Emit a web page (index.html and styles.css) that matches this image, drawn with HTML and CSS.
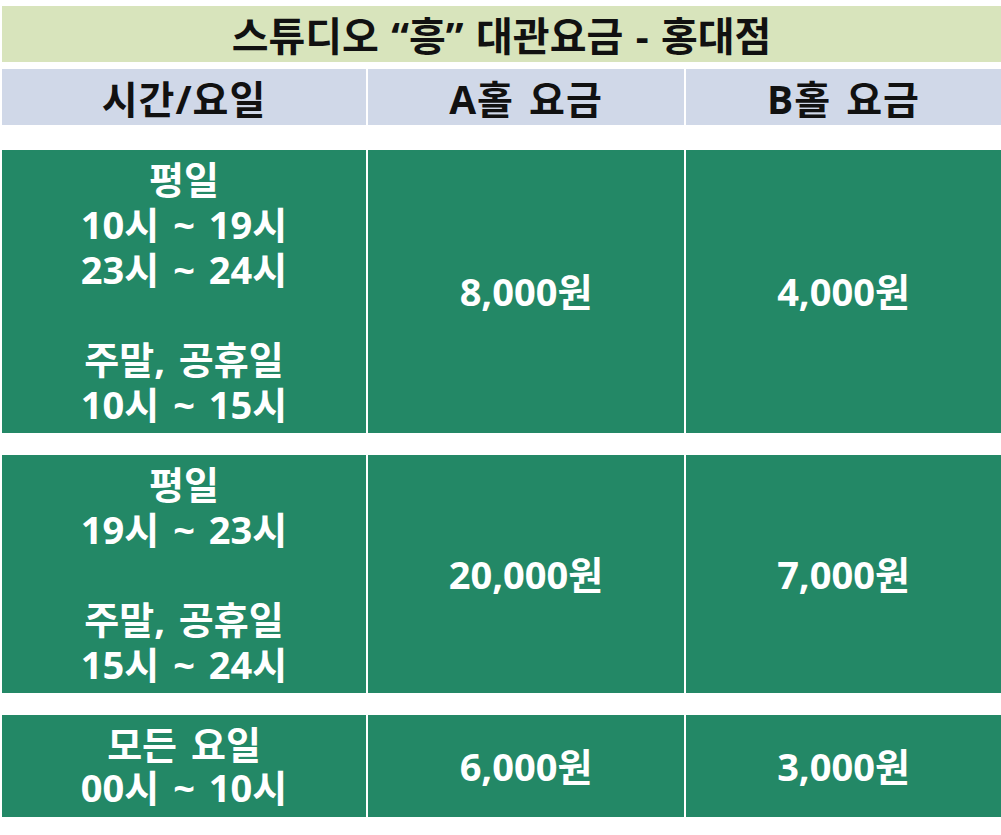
FILE: index.html
```html
<!DOCTYPE html>
<html lang="ko">
<head>
<meta charset="utf-8">
<link rel="stylesheet" href="styles.css">
</head>
<body>
<div class="table">
  <div class="title">스튜디오 “흥” 대관요금 - 홍대점</div>
  <div class="row head">
    <div class="cell">시간/요일</div>
    <div class="cell">A홀 요금</div>
    <div class="cell">B홀 요금</div>
  </div>
  <div class="spacer s1"></div>
  <div class="row body r1">
    <div class="cell">
      <div class="lines">
        <div class="line">평일</div>
        <div class="line">10시 ~ 19시</div>
        <div class="line">23시 ~ 24시</div>
        <div class="line blank"></div>
        <div class="line">주말, 공휴일</div>
        <div class="line">10시 ~ 15시</div>
      </div>
    </div>
    <div class="cell">8,000원</div>
    <div class="cell">4,000원</div>
  </div>
  <div class="spacer"></div>
  <div class="row body r2">
    <div class="cell">
      <div class="lines">
        <div class="line">평일</div>
        <div class="line">19시 ~ 23시</div>
        <div class="line blank"></div>
        <div class="line">주말, 공휴일</div>
        <div class="line">15시 ~ 24시</div>
      </div>
    </div>
    <div class="cell">20,000원</div>
    <div class="cell">7,000원</div>
  </div>
  <div class="spacer"></div>
  <div class="row body r3">
    <div class="cell">
      <div class="lines tight">
        <div class="line">모든 요일</div>
        <div class="line">00시 ~ 10시</div>
      </div>
    </div>
    <div class="cell">6,000원</div>
    <div class="cell">3,000원</div>
  </div>
</div>
</body>
</html>
```

FILE: styles.css
```css
html, body {
  margin: 0;
  padding: 0;
  background: #ffffff;
}
body {
  font-family: "Open Sans", "Noto Sans CJK KR", sans-serif;
  font-weight: 700;
}
.table {
  display: flex;
  flex-direction: column;
  padding: 6px 0 0 2px;
  width: 999px;
}
.title {
  height: 56px;
  background: #d8e4bc;
  color: #111;
  font-size: 40px;
  word-spacing: 2px;
  display: flex;
  align-items: center;
  justify-content: center;
  margin-bottom: 7px;
}
.row {
  display: grid;
  grid-template-columns: 364px 316px 315px;
  column-gap: 2px;
}
.cell {
  display: flex;
  align-items: center;
  justify-content: center;
  text-align: center;
}
.head {
  height: 56px;
}
.head .cell {
  background: #d0d8e8;
  color: #111;
  font-size: 39px;
  letter-spacing: 1px;
  word-spacing: 4px;
}
.spacer {
  height: 22px;
}
.spacer.s1 {
  height: 25px;
}
.body .cell {
  background: #238866;
  color: #ffffff;
  font-size: 38px;
  line-height: 45px;
  word-spacing: 4px;
}
.lines {
  display: flex;
  flex-direction: column;
}
.line {
  height: 45px;
  white-space: nowrap;
}
.lines.tight .line {
  height: 43px;
  line-height: 43px;
}
.r1 { height: 283px; }
.r2 { height: 238px; }
.r3 { height: 102px; }
```
